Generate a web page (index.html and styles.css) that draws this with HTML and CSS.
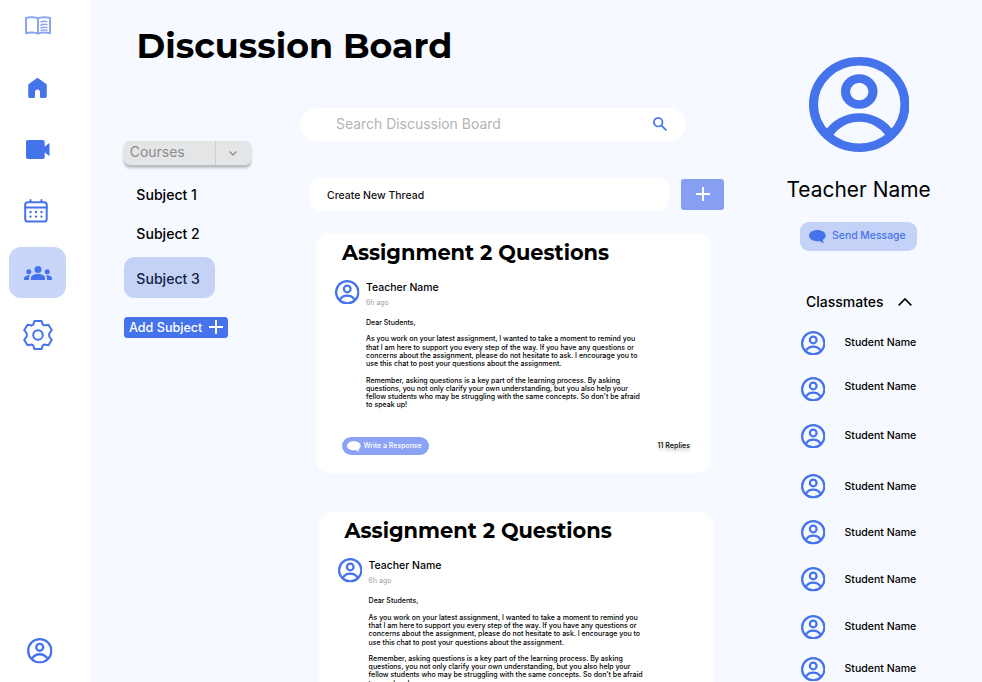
FILE: index.html
```html
<!DOCTYPE html>
<html lang="en">
<head>
<meta charset="utf-8">
<title>Discussion Board</title>
<link rel="stylesheet" href="styles.css">
</head>
<body>
<svg class="defs" aria-hidden="true">
  <symbol id="person" viewBox="0 0 100 100" preserveAspectRatio="none">
    <g fill="none" stroke="currentColor" stroke-width="9">
      <circle cx="50" cy="50" r="45.5"/>
      <circle cx="50" cy="36.4" r="13.7"/>
      <path d="M20 80A35.8 35.8 0 0 1 80 80"/>
    </g>
  </symbol>
  <symbol id="bubble" viewBox="0 0 17 13">
    <path fill="currentColor" d="M8.300 0C3.700 0 0 2.400 0 5.600s3.700 5.600 8.300 5.600c.9 0 1.800-.1 2.600-.3 1 1.100 2.400 1.800 4.100 2-.8-.9-1.100-2-1-3.200 1.700-1 2.700-2.500 2.700-4.100C16.700 2.400 13 0 8.300 0z"/>
  </symbol>
</svg>
<div class="app">
  <nav class="sidebar">
    <svg class="book" viewBox="0 0 26 19" fill="none" stroke="currentColor" stroke-width="2" stroke-linejoin="round" stroke-linecap="round">
      <path d="M13 2.500C10.500.900 4.500.800 1 1.900V17.300c3.500-1.300 9.500-1.200 12 .4 2.500-1.600 8.500-1.700 12-.4V1.900C21.500.800 15.500.900 13 2.500zV17.500"/>
      <path stroke-width="1.400" d="M16 6c1.500-.7 3.800-.9 6-.4M16 9c1.500-.7 3.800-.9 6-.4M16 12c1.500-.7 3.800-.9 6-.4M16 14.600c1.500-.7 3.800-.9 6-.4"/>
    </svg>
    <svg class="home" viewBox="0 0 19 20"><path fill="currentColor" d="M8.400.400a1.800 1.800 0 0 1 2.200 0l7.300 5.300c.6.500.9 1.100.9 1.800v10.600c0 1.200-.8 2-2 2h-3.300c-.9 0-1.500-.6-1.500-1.500v-4.600a2.500 2.500 0 0 0-5 0v4.600c0 .9-.6 1.500-1.500 1.500H2.200c-1.200 0-2-.8-2-2V7.500c0-.7.3-1.300.9-1.800z"/></svg>
    <svg class="video" viewBox="0 0 24 19"><path fill="currentColor" d="M2 0h14.700c1.200 0 2 .8 2 2v4.700L22.600 3.500c.500-.4.900-.2.900.4v11.200c0 .6-.4.800-.9.400L18.700 12.300V17c0 1.200-.8 2-2 2H2c-1.200 0-2-.8-2-2V2C0 .8.800 0 2 0z"/></svg>
    <svg class="calendar" viewBox="0 0 24 24" fill="none" stroke="currentColor" stroke-width="2" stroke-linecap="round">
      <rect x="1.200" y="3.200" width="21.500" height="19.300" rx="2.600"/>
      <path d="M1.200 8.500h21.500M6.500 1v2M17.500 1v2"/>
      <path stroke-width="2.400" d="M6.500 13h.01M12 13h.01M17.500 13h.01M6.500 17.600h.01M12 17.600h.01M17.500 17.600h.01"/>
    </svg>
    <div class="active">
      <svg class="group" viewBox="0 0 28 14" fill="currentColor">
        <circle cx="14" cy="3.500" r="3.500"/><circle cx="4.800" cy="5.700" r="2.500"/><circle cx="23.200" cy="5.700" r="2.500"/>
        <path d="M7 14v-2c0-2.300 3.200-3.900 7-3.900s7 1.600 7 3.900v2zM0 14v-1.500C0 10.500 2.300 9 6.100 9.300 5.200 10.300 5 11.300 5 14zM28 14v-1.500c0-2-2.300-3.500-6.100-3.200.9 1 1.100 2 1.100 4.700z"/>
      </svg>
    </div>
    <svg class="gear" viewBox="0 0 30 30" fill="none" stroke="currentColor" stroke-width="2" stroke-linejoin="round">
      <path d="M11.400 1h7.200l1.200 3.600 1.400.8 4.300-.6 3.300 5.400-2.600 3.300v3l2.600 3.300-3.300 5.400-4.300-.6-1.400.8-1.200 3.600h-7.200l-1.200-3.600-1.400-.8-4.300.6-3.300-5.400 2.600-3.300v-3l-2.600-3.300 3.300-5.400 4.300.6 1.400-.8z"/>
      <circle cx="15" cy="15" r="4.800"/>
    </svg>
    <svg class="me"><use href="#person"/></svg>
  </nav>

  <main class="main">
    <h1>Discussion Board</h1>
    <div class="columns">
      <section class="courses">
        <div class="select"><span>Courses</span><i><svg viewBox="0 0 8 5"><path d="M.5.500 4 4 7.500.500" fill="none" stroke="currentColor" stroke-width="1.300"/></svg></i></div>
        <ul class="subjects">
          <li>Subject 1</li>
          <li>Subject 2</li>
          <li class="current">Subject 3</li>
        </ul>
        <button class="add">Add Subject<svg viewBox="0 0 14 14"><path d="M7 0v14M0 7h14" stroke="currentColor" stroke-width="1.900"/></svg></button>
      </section>

      <section class="board">
        <div class="search"><span>Search Discussion Board</span><svg viewBox="0 0 14 14" fill="none" stroke="currentColor" stroke-width="1.700"><circle cx="5.200" cy="5.200" r="4.300"/><path d="M8.300 8.300l5.100 5.100"/></svg></div>
        <div class="create">
          <div class="field">Create New Thread</div>
          <button class="plus"><svg viewBox="0 0 14 14"><path d="M7 0v14M0 7h14" stroke="currentColor" stroke-width="1.900"/></svg></button>
        </div>
        <article class="card">
          <h2>Assignment 2 Questions</h2>
          <div class="post">
            <svg class="avatar"><use href="#person"/></svg>
            <div class="content">
              <div class="author">Teacher Name</div>
              <div class="time">6h ago</div>
              <div class="text">
                <p>Dear Students,</p>
                <p>As you work on your latest assignment, I wanted to take a moment to remind you<br>that I am here to support you every step of the way. If you have any questions or<br>concerns about the assignment, please do not hesitate to ask. I encourage you to<br>use this chat to post your questions about the assignment.</p>
                <p>Remember, asking questions is a key part of the learning process. By asking<br>questions, you not only clarify your own understanding, but you also help your<br>fellow students who may be struggling with the same concepts. So don't be afraid<br>to speak up!</p>
              </div>
            </div>
          </div>
          <footer><button class="respond"><svg><use href="#bubble"/></svg>Write a Response</button><span class="replies">11 Replies</span></footer>
        </article>
        <article class="card second">
          <h2>Assignment 2 Questions</h2>
          <div class="post">
            <svg class="avatar"><use href="#person"/></svg>
            <div class="content">
              <div class="author">Teacher Name</div>
              <div class="time">6h ago</div>
              <div class="text">
                <p>Dear Students,</p>
                <p>As you work on your latest assignment, I wanted to take a moment to remind you<br>that I am here to support you every step of the way. If you have any questions or<br>concerns about the assignment, please do not hesitate to ask. I encourage you to<br>use this chat to post your questions about the assignment.</p>
                <p>Remember, asking questions is a key part of the learning process. By asking<br>questions, you not only clarify your own understanding, but you also help your<br>fellow students who may be struggling with the same concepts. So don't be afraid<br>to speak up!</p>
              </div>
            </div>
          </div>
          <footer><button class="respond"><svg><use href="#bubble"/></svg>Write a Response</button><span class="replies">11 Replies</span></footer>
        </article>
      </section>
    </div>
  </main>

  <aside class="people">
    <svg class="teacher"><use href="#person"/></svg>
    <div class="name">Teacher Name</div>
    <button class="message"><svg><use href="#bubble"/></svg>Send Message</button>
    <div class="classmates">Classmates<svg viewBox="0 0 14 8"><path d="M.7 7.300 7 1l6.300 6.300" fill="none" stroke="currentColor" stroke-width="1.700"/></svg></div>
    <ul class="students">
      <li><svg><use href="#person"/></svg><span>Student Name</span></li>
      <li><svg><use href="#person"/></svg><span class="raised">Student Name</span></li>
      <li><svg><use href="#person"/></svg><span>Student Name</span></li>
      <li><svg><use href="#person"/></svg><span>Student Name</span></li>
      <li><svg><use href="#person"/></svg><span>Student Name</span></li>
      <li><svg><use href="#person"/></svg><span>Student Name</span></li>
      <li><svg><use href="#person"/></svg><span>Student Name</span></li>
      <li><svg><use href="#person"/></svg><span>Student Name</span></li>
    </ul>
  </aside>
</div>
</body>
</html>
```
FILE: styles.css
```css
* { box-sizing: border-box; margin: 0; padding: 0; }
body {
  width: 982px; height: 682px; overflow: hidden;
  background: #f6f9ff; color: #000;
  font-family: Inter, "Liberation Sans", sans-serif; font-size: 13.95px; line-height: 1.2;
}
svg { display: block; flex: none; }
ul { list-style: none; }
button { border: 0; font: inherit; display: flex; align-items: center; }
.defs { display: none; }
.app { display: grid; grid-template-columns: 90px 676px 216px; height: 682px; }

.sidebar { background: #fff; color: #4573ec; display: flex; flex-direction: column; align-items: flex-start; height: 682px; }
.book { width: 26px; height: 19px; margin: 16px 0 0 25px; color: #8ba5f3; }
.home { width: 19px; height: 20px; margin: 43px 0 0 28.300px; }
.video { width: 24px; height: 19px; margin: 42px 0 0 26.300px; }
.calendar { width: 24px; height: 24px; margin: 40px 0 0 24px; }
.active { width: 57px; height: 51px; margin: 24px 0 0 9px; border-radius: 12px; background: #cad6f9; display: flex; align-items: center; justify-content: center; }
.group { width: 28px; height: 14px; margin-left: 1px; }
.gear { width: 30px; height: 30px; margin: 21.500px 0 0 23px; }
.me { width: 25.500px; height: 25.500px; margin: auto 0 18.300px 27.300px; }

.main { height: 682px; overflow: hidden; }
h1 { font: 700 34.850px/42px Montserrat, Inter, sans-serif; margin: 25px 0 0 46.500px; }
.columns { display: grid; grid-template-columns: 176px 1fr; padding: 40.500px 0 0 34px; }

.courses { padding-top: 33.500px; }
.select { display: flex; width: 127.500px; height: 24px; border-radius: 6px; background: #e4e5e7; color: #8b8c8e; box-shadow: 0 2.800px 2.800px rgba(0,0,0,.25); margin-left: -.5px; line-height: 21px; }
.select span { width: 92.500px; padding-left: 6.300px; border-right: 1px solid #cfd0d2; }
.select i { flex: 1; display: flex; align-items: center; justify-content: center; padding-right: 2px; }
.select svg { width: 8px; height: 5px; }
.subjects { margin-top: 17.500px; padding-bottom: 19px; }
.subjects li { height: 39.500px; padding-left: 12.300px; font-size: 14.100px; font-weight: 450; line-height: 24px; }
.subjects li:nth-child(2) { height: 39px; }
.subjects .current { width: 91px; height: 41px; margin-top: -4.500px; border-radius: 10px; background: #c5d2f8; color: #141f45; line-height: 43px; }
.add { width: 104px; height: 21px; border-radius: 3.500px; background: #4573ec; color: #fff; font-size: 12.600px; font-weight: 450; padding: 2px 0 0 5px; gap: 6.500px; }
.add svg { width: 14px; height: 14px; margin-top: -2px; }

.search { width: 386px; height: 33px; border-radius: 16.500px; background: #fff; color: #b4b4b6; display: flex; align-items: center; justify-content: space-between; padding: 0 19px 0 36px; }
.search svg { width: 14px; height: 14px; color: #4573ec; }
.create { display: flex; align-items: center; gap: 12px; margin: 37.700px 0 0 9.500px; }
.field { width: 359.500px; height: 33px; border-radius: 10px; background: #fff; font-size: 10.480px; font-weight: 450; color: #111; line-height: 36px; padding-left: 17.500px; }
.plus { width: 43px; height: 30.500px; border-radius: 3px; background: #879ff3; color: #fff; justify-content: center; }
.plus svg { width: 14px; height: 14px; margin-top: -1px; }

.card { width: 394.500px; height: 239.500px; margin: 22px 0 0 16px; border-radius: 14px; background: #fff; }
.second { margin: 39px 0 0 18.600px; }
h2 { font: 700 20.900px/30px Montserrat, Inter, sans-serif; padding: 4.500px 0 0 26px; }
.post { display: flex; padding: 12px 0 0 19.300px; gap: 6.200px; }
.avatar { width: 24.500px; height: 24.500px; color: #4573ec; }
.author { font-size: 10.460px; font-weight: 500; line-height: 14px; margin-top: 1px; }
.time { font-size: 6.970px; line-height: 9px; color: #a0a0a0; margin-top: 3px; }
.text { font-size: 7.010px; font-weight: 500; line-height: 8.240px; margin-top: 12.200px; white-space: nowrap; }
.text p + p { margin-top: 8.240px; }
footer { display: flex; justify-content: space-between; margin: 27.300px 20.500px 0 26px; }
.respond { width: 87px; height: 18.500px; border-radius: 9.300px; background: #8ba3f4; color: #fff; font-size: 6.970px; font-weight: 450; padding: 0 0 0 4.500px; gap: 3px; }
.respond svg { width: 14px; height: 11px; }
.replies { font-size: 7.100px; font-weight: 500; line-height: 17px; text-shadow: 0 2.800px 2.800px rgba(0,0,0,.25); }

.people { padding: 56.500px 0 0 34.500px; height: 682px; overflow: hidden; }
.teacher { width: 100.500px; height: 95px; margin-left: 8px; color: #4573ec; }
.name { font-size: 20.900px; line-height: 26px; margin: 25.500px 0 0 -14px; }
.message { width: 116.500px; height: 28.500px; margin: 19px 0 0 -.4px; border-radius: 9px; background: #c5d2f8; color: #4573ec; font-size: 10.400px; font-weight: 450; padding: 0 0 0 8.500px; gap: 6.500px; }
.message svg { width: 17px; height: 13px; }
.classmates { display: flex; align-items: center; gap: 14.500px; margin: 43px 0 0 5.500px; font-weight: 450; font-size: 14px; }
.classmates svg { width: 14px; height: 8px; }
.students { display: grid; grid-template-rows: 46px 47px 50.500px 46px 47px 47.500px 42px 25px; margin-top: 20px; }
.students li { display: flex; align-items: center; height: 25px; gap: 19.500px; font-size: 10.560px; font-weight: 500; }
.students span { padding-top: 2px; }
.students svg { width: 24.500px; height: 24.500px; color: #4573ec; }
.students .raised { padding: 0 0 3px; }
```
